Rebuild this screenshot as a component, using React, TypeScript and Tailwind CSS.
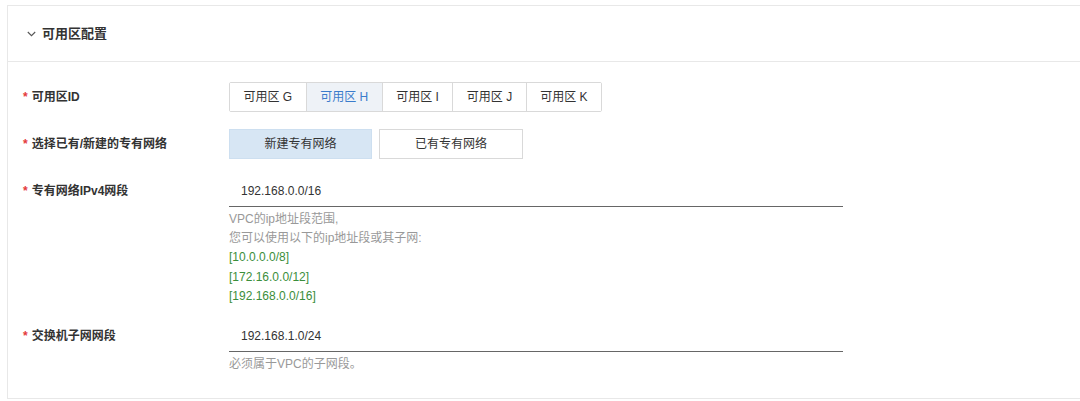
const FONT = { fontFamily: '"Liberation Sans", "Noto Sans CJK SC", sans-serif' };

const ZONES = ["可用区 G", "可用区 H", "可用区 I", "可用区 J", "可用区 K"];

function Label({ text }: { text: string }) {
  return (
    <div className="w-[206px] shrink-0 flex items-center h-[30px] text-[12px] font-semibold text-[#333]">
      <span className="text-[#e4393c] mr-[4px] text-[12px]">*</span>
      {text}
    </div>
  );
}

function Field({ value, help }: { value: string; help: React.ReactNode }) {
  return (
    <div className="w-[614px]">
      <div className="h-[31px] flex items-center pl-[12px] border-b-[1.5px] border-[#666] text-[12px] text-[#333]">
        {value}
      </div>
      <div className="pt-[3px] text-[12px] leading-[19.2px] text-[#999]">{help}</div>
    </div>
  );
}

export default function App() {
  return (
    <div className="w-[1080px] h-[401px] bg-white pt-[5px] pl-[7px] overflow-hidden" style={FONT}>
      <div className="h-[394px] border-l border-t border-b border-[#e8e8e8]">
        <div className="h-[56px] flex items-center pl-[19px] border-b border-[#e8e8e8]">
          <svg width="9" height="6" viewBox="0 0 9 6" className="mr-[6px]">
            <path d="M0.8 1 L4.5 4.7 L8.2 1" fill="none" stroke="#555" strokeWidth="1.1" />
          </svg>
          <span className="text-[13px] font-semibold text-[#333]">可用区配置</span>
        </div>

        <div className="pl-[15px] pt-[20px] flex flex-col">
          <div className="flex">
            <Label text="可用区ID" />
            <div className="flex h-[30px] border border-[#d9d9d9] rounded-[2px]">
              {ZONES.map((z, i) => (
                <div
                  key={z}
                  className={`px-[13.5px] flex items-center text-[12px] ${i > 0 ? "border-l border-[#d9d9d9]" : ""} ${
                    i === 1 ? "bg-[#eef2f7] text-[#3a7ccc]" : "bg-white text-[#333]"
                  }`}
                >
                  {z}
                </div>
              ))}
            </div>
          </div>

          <div className="flex mt-[17px]">
            <Label text="选择已有/新建的专有网络" />
            <div className="flex gap-[7px]">
              <div className="w-[143px] h-[30px] flex items-center justify-center bg-[#d7e6f4] border border-[#cddff0] text-[12px] text-[#333]">
                新建专有网络
              </div>
              <div className="w-[144px] h-[30px] flex items-center justify-center bg-white border border-[#d9d9d9] text-[12px] text-[#333]">
                已有专有网络
              </div>
            </div>
          </div>

          <div className="flex mt-[17px]">
            <Label text="专有网络IPv4网段" />
            <Field
              value="192.168.0.0/16"
              help={
                <>
                  <div>VPC的ip地址段范围,</div>
                  <div>您可以使用以下的ip地址段或其子网:</div>
                  <div className="text-[#3b8e3b]">[10.0.0.0/8]</div>
                  <div className="text-[#3b8e3b]">[172.16.0.0/12]</div>
                  <div className="text-[#3b8e3b]">[192.168.0.0/16]</div>
                </>
              }
            />
          </div>

          <div className="flex mt-[15px]">
            <Label text="交换机子网网段" />
            <Field value="192.168.1.0/24" help={<div>必须属于VPC的子网段。</div>} />
          </div>
        </div>
      </div>
    </div>
  );
}
